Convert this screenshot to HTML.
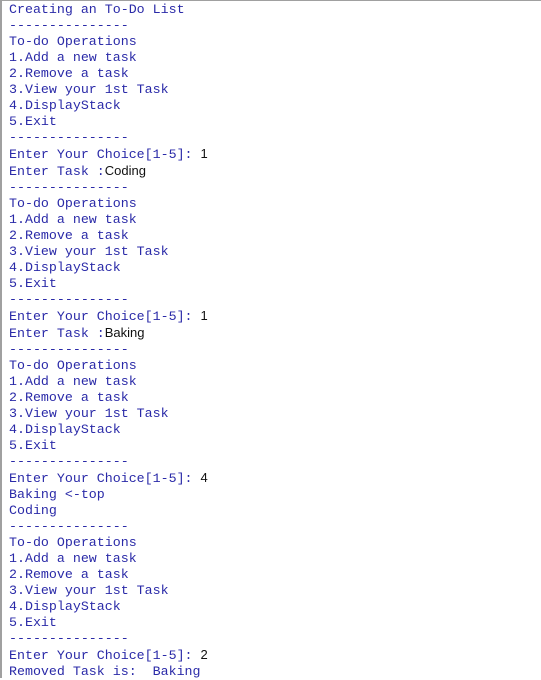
<!DOCTYPE html>
<html><head><style>
html,body{margin:0;padding:0;background:#fff;width:541px;height:678px;overflow:hidden}
.b{position:absolute;left:0;top:0;width:541px;height:678px;border-top:1px solid #a0a0a0;border-left:2px solid #a0a0a0;box-sizing:border-box}
pre{position:absolute;left:9px;top:2px;margin:0;font-family:"Liberation Mono",monospace;font-size:13.3px;line-height:16px;color:#2a2aa8}
.i{color:#111;font-family:"Liberation Sans",sans-serif;font-size:13px}
</style></head><body><div class="b"></div><pre>Creating an To-Do List
---------------
To-do Operations
1.Add a new task
2.Remove a task
3.View your 1st Task
4.DisplayStack
5.Exit
---------------
Enter Your Choice[1-5]: <span class="i">1</span>
Enter Task :<span class="i">Coding</span>
---------------
To-do Operations
1.Add a new task
2.Remove a task
3.View your 1st Task
4.DisplayStack
5.Exit
---------------
Enter Your Choice[1-5]: <span class="i">1</span>
Enter Task :<span class="i">Baking</span>
---------------
To-do Operations
1.Add a new task
2.Remove a task
3.View your 1st Task
4.DisplayStack
5.Exit
---------------
Enter Your Choice[1-5]: <span class="i">4</span>
Baking &lt;-top
Coding
---------------
To-do Operations
1.Add a new task
2.Remove a task
3.View your 1st Task
4.DisplayStack
5.Exit
---------------
Enter Your Choice[1-5]: <span class="i">2</span>
Removed Task is:  Baking</pre></body></html>
